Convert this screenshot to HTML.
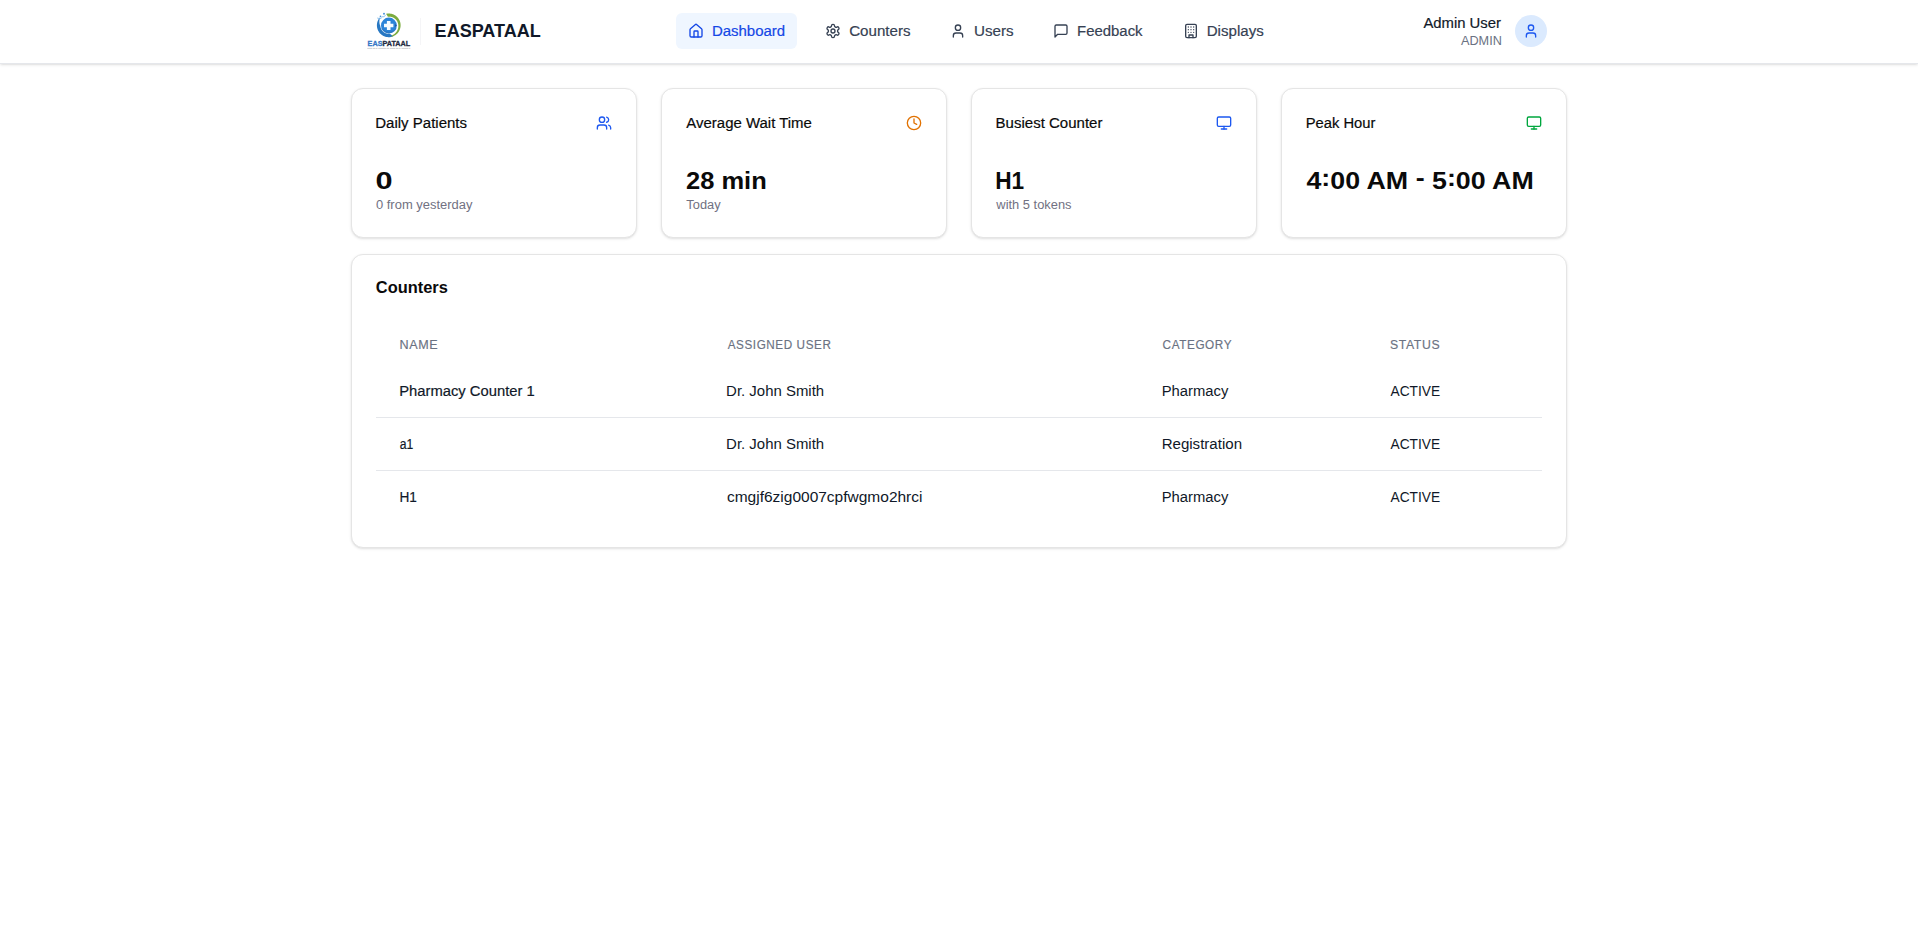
<!DOCTYPE html>
<html lang="en">
<head>
<meta charset="utf-8">
<title>EASPATAAL - Dashboard</title>
<style>
*{box-sizing:border-box;margin:0;padding:0}
html,body{width:1918px;height:949px;overflow:hidden;background:#fff}
body{font-family:"Liberation Sans",sans-serif;color:#0a0a0a;position:relative;-webkit-font-smoothing:antialiased}
.t{position:absolute;white-space:nowrap;line-height:20px;font-size:14px;transform-origin:0 50%}
svg.i{position:absolute;width:16px;height:16px;fill:none;stroke:currentColor;stroke-width:2;stroke-linecap:round;stroke-linejoin:round}
#hdr{position:absolute;left:0;top:0;width:1918px;height:64px;background:#fff;border-bottom:1px solid #e5e7eb;box-shadow:0 1px 3px rgba(0,0,0,.1),0 1px 2px -1px rgba(0,0,0,.1)}
#brand{top:17px;font-size:18px;line-height:28px;font-weight:700;color:#101828}
#sep{position:absolute;left:420px;top:18px;width:1px;height:27px;background:#f5f5f7}
.nv{font-weight:500;-webkit-text-stroke:.18px currentColor;color:#364153;top:21px}
#navact{position:absolute;left:676px;top:13px;width:121px;height:36px;border-radius:6px;background:#eff6ff}
.card{position:absolute;background:#fff;border:1px solid #e5e5e5;border-radius:12px;box-shadow:0 1px 3px rgba(0,0,0,.1),0 1px 2px -1px rgba(0,0,0,.1)}
.ct{top:113px;font-weight:500;-webkit-text-stroke:.18px currentColor;color:#0a0a0a}
.cv{top:165px;font-size:24px;line-height:32px;font-weight:700;color:#0a0a0a}
.cv i{font-style:normal;position:relative;top:-3.2px}
.cs{top:197px;font-size:12px;line-height:16px;color:#717182}
.th{-webkit-text-stroke:.15px currentColor;top:337px;font-size:12px;line-height:16px;font-weight:500;color:#6a7282;letter-spacing:.6px}
.td{color:#101828}
.r1{top:381px}.r2{top:434px}.r3{top:487px}
.dv{position:absolute;left:376px;width:1166px;height:1px;background:#e5e7eb}
</style>
</head>
<body>
<div id="hdr"></div>
<!-- logo -->
<svg id="logo" style="position:absolute;left:360px;top:6px" width="60" height="50" viewBox="360 6 60 50">
  <path d="M393.26 36.33L392.63 36.57L392.00 36.76L391.35 36.92L390.70 37.05L390.04 37.14L389.37 37.19L388.70 37.20L388.04 37.18L387.38 37.11L386.72 37.02L386.06 36.88L385.42 36.71L384.79 36.50L384.17 36.26L383.56 35.98L382.97 35.67L382.40 35.33L381.85 34.96L381.32 34.55L380.81 34.12L380.33 33.66L379.88 33.17L379.45 32.66L379.05 32.13L378.69 31.57L378.35 30.99L378.05 30.40L377.78 29.79L377.55 29.17L377.35 28.53L377.18 27.88L377.06 27.23L376.97 26.57L376.92 25.91L376.90 25.24L376.92 24.57L376.98 23.91L377.08 23.25L377.21 22.60L377.38 21.95L377.59 21.32L377.83 20.70L378.10 20.09L378.41 19.50L378.75 18.93L379.12 18.38L379.52 17.84L379.96 17.34L379.96 17.34L379.84 18.10L379.69 18.78L379.57 19.45L379.47 20.10L379.41 20.73L379.38 21.35L379.38 21.96L379.42 22.55L379.48 23.13L379.58 23.69L379.70 24.23L379.86 24.75L380.03 25.26L380.24 25.74L380.35 26.21L380.41 26.68L380.50 27.15L380.62 27.61L380.76 28.06L380.93 28.51L381.12 28.94L381.34 29.37L381.58 29.78L381.84 30.18L382.12 30.56L382.43 30.92L382.75 31.27L383.09 31.60L383.46 31.91L383.83 32.20L384.23 32.47L384.64 32.71L385.06 32.93L385.49 33.13L385.93 33.30L386.39 33.45L386.85 33.57L387.31 33.67L387.78 33.74L388.26 33.78L388.73 33.80L389.21 33.79L389.68 33.75L390.22 34.09L390.83 34.53L391.50 34.99L392.27 35.49L393.26 36.33Z" fill="#2878c3"/>
  <path d="M385.95 13.85L386.72 13.69L387.50 13.57L388.29 13.51L389.07 13.50L389.86 13.55L390.65 13.65L391.42 13.79L392.18 14.00L392.93 14.25L393.66 14.55L394.37 14.90L395.05 15.29L395.71 15.73L396.33 16.22L396.92 16.74L397.48 17.30L397.99 17.90L398.47 18.53L398.90 19.19L399.28 19.88L399.62 20.59L399.91 21.33L400.15 22.08L400.34 22.85L400.48 23.62L400.57 24.41L400.60 25.20L400.58 25.99L400.51 26.77L400.38 27.55L400.21 28.32L399.98 29.08L399.70 29.82L399.38 30.53L399.00 31.23L398.58 31.90L398.12 32.54L397.61 33.14L397.07 33.72L396.49 34.25L395.87 34.74L395.23 35.20L394.55 35.60L393.85 35.97L393.12 36.28L392.38 36.54L391.62 36.76L390.85 36.92L390.85 36.92L391.51 36.30L392.07 35.56L392.64 35.05L393.25 34.70L393.84 34.33L394.39 33.91L394.92 33.47L395.41 33.00L395.88 32.50L396.30 31.97L396.69 31.43L397.04 30.86L397.35 30.27L397.61 29.66L397.84 29.05L398.03 28.42L398.17 27.78L398.27 27.14L398.33 26.50L398.34 25.86L398.31 25.22L398.24 24.58L398.13 23.96L397.98 23.35L397.79 22.75L397.56 22.17L397.30 21.61L397.00 21.06L396.66 20.55L396.29 20.05L395.90 19.59L395.47 19.15L395.02 18.75L394.54 18.38L394.04 18.04L393.53 17.73L392.99 17.47L392.45 17.24L391.89 17.05L391.32 16.89L390.74 16.78L390.16 16.70L389.58 16.66L389.00 16.67L388.42 16.71L387.85 16.78L387.02 15.36L385.95 13.85Z" fill="#7cab3f"/>
  <circle cx="388.9" cy="25.5" r="7.9" fill="#2b84d8"/>
  <path d="M381.3 27.6A7.9 7.9 0 0 0 396.5 27.6A9.5 9.5 0 0 1 381.3 27.6Z" fill="#2a70ba" opacity=".6"/>
  <path d="M386.9 21h3.6v2.8h2.9v3.5h-2.9v2.7h-3.6v-2.7h-2.9v-3.5h2.9z" fill="#f4fbff"/>
  <path d="M395.2 24l1.6 1.4-1.6 1.5z" fill="#234f9c"/>
  <circle cx="384" cy="13.7" r="0.95" fill="#3f8ed8"/>
  <circle cx="380.5" cy="16.3" r="0.85" fill="#3f8ed8"/>
  <path d="M377.6 18.2q2.4 1.4 4-.2M382.2 16.9q1.8.4 3.2-1.3" stroke="#6db1e8" stroke-width=".8" fill="none" stroke-linecap="round"/>
  <text x="367.6" y="46.2" font-family="Liberation Sans, sans-serif" font-weight="700" font-size="7.3" textLength="42.6" lengthAdjust="spacingAndGlyphs"><tspan fill="#3576c6" stroke="#3576c6" stroke-width=".3">EAS</tspan><tspan fill="#232a40" stroke="#232a40" stroke-width=".3">PATAAL</tspan></text>
  <path d="M367.3 48.4h43" stroke="#b4b6bb" stroke-width=".9" stroke-dasharray="5.2 .5 2.3 .4 1.5 .5 1 .4 6.8 .5 3 .6" opacity=".75" fill="none"/>
</svg>
<div id="sep"></div>
<span class="t" id="brand" style="left:434px;transform:translateX(0.60px) scaleX(1.0019)">EASPATAAL</span>

<div id="navact"></div>
<svg class="i" style="left:688px;top:23px;color:#1447e6" viewBox="0 0 24 24"><path d="M15 21v-8a1 1 0 0 0-1-1h-4a1 1 0 0 0-1 1v8"/><path d="M3 10a2 2 0 0 1 .709-1.528l7-5.999a2 2 0 0 1 2.582 0l7 5.999A2 2 0 0 1 21 10v9a2 2 0 0 1-2 2H5a2 2 0 0 1-2-2z"/></svg>
<span class="t nv" id="n1" style="left:711px;color:#1447e6;transform:translateX(0.88px) scaleX(1.0704)">Dashboard</span>
<svg class="i" style="left:825px;top:23px;color:#364153" viewBox="0 0 24 24"><path d="M12.22 2h-.44a2 2 0 0 0-2 2v.18a2 2 0 0 1-1 1.73l-.43.25a2 2 0 0 1-2 0l-.15-.08a2 2 0 0 0-2.73.73l-.22.38a2 2 0 0 0 .73 2.73l.15.1a2 2 0 0 1 1 1.72v.51a2 2 0 0 1-1 1.74l-.15.09a2 2 0 0 0-.73 2.73l.22.38a2 2 0 0 0 2.73.73l.15-.08a2 2 0 0 1 2 0l.43.25a2 2 0 0 1 1 1.73V20a2 2 0 0 0 2 2h.44a2 2 0 0 0 2-2v-.18a2 2 0 0 1 1-1.73l.43-.25a2 2 0 0 1 2 0l.15.08a2 2 0 0 0 2.73-.73l.22-.39a2 2 0 0 0-.73-2.73l-.15-.08a2 2 0 0 1-1-1.74v-.5a2 2 0 0 1 1-1.74l.15-.09a2 2 0 0 0 .73-2.73l-.22-.38a2 2 0 0 0-2.73-.73l-.15.08a2 2 0 0 1-2 0l-.43-.25a2 2 0 0 1-1-1.73V4a2 2 0 0 0-2-2z"/><circle cx="12" cy="12" r="3"/></svg>
<span class="t nv" id="n2" style="left:849px;transform:translateX(0.18px) scaleX(1.0797)">Counters</span>
<svg class="i" style="left:950px;top:23px;color:#364153" viewBox="0 0 24 24"><path d="M19 21v-2a4 4 0 0 0-4-4H9a4 4 0 0 0-4 4v2"/><circle cx="12" cy="7" r="4"/></svg>
<span class="t nv" id="n3" style="left:973px;transform:translateX(0.93px) scaleX(1.0841)">Users</span>
<svg class="i" style="left:1053px;top:23px;color:#364153" viewBox="0 0 24 24"><path d="M21 15a2 2 0 0 1-2 2H7l-4 4V5a2 2 0 0 1 2-2h14a2 2 0 0 1 2 2z"/></svg>
<span class="t nv" id="n4" style="left:1077px;transform:translateX(0.03px) scaleX(1.0663)">Feedback</span>
<svg class="i" style="left:1183px;top:23px;color:#364153" viewBox="0 0 24 24"><rect width="16" height="20" x="4" y="2" rx="2" ry="2"/><path d="M9 22v-4h6v4"/><path d="M8 6h.01"/><path d="M16 6h.01"/><path d="M12 6h.01"/><path d="M12 10h.01"/><path d="M12 14h.01"/><path d="M16 10h.01"/><path d="M16 14h.01"/><path d="M8 10h.01"/><path d="M8 14h.01"/></svg>
<span class="t nv" id="n5" style="left:1206px;transform:translateX(0.73px) scaleX(1.0773)">Displays</span>

<span class="t" id="au" style="left:1423px;top:13px;font-weight:500;-webkit-text-stroke:.18px currentColor;color:#101828;transform:translateX(0.39px) scaleX(1.0608)">Admin User</span>
<span class="t" id="ar" style="left:1460px;top:33px;font-size:12px;line-height:16px;color:#6a7282;transform:translateX(0.96px) scaleX(1.0573)">ADMIN</span>
<div style="position:absolute;left:1515px;top:15px;width:32px;height:32px;border-radius:50%;background:#dbeafe"></div>
<svg class="i" style="left:1523px;top:23px;color:#1d58f0" viewBox="0 0 24 24"><path d="M19 21v-2a4 4 0 0 0-4-4H9a4 4 0 0 0-4 4v2"/><circle cx="12" cy="7" r="4"/></svg>

<!-- stat cards -->
<div class="card" style="left:351px;top:88px;width:286px;height:150px"></div>
<div class="card" style="left:661px;top:88px;width:286px;height:150px"></div>
<div class="card" style="left:971px;top:88px;width:286px;height:150px"></div>
<div class="card" style="left:1281px;top:88px;width:286px;height:150px"></div>

<span class="t ct" id="c1t" style="left:375px;transform:translateX(0.25px) scaleX(1.0723)">Daily Patients</span>
<svg class="i" style="left:596px;top:115px;color:#1d58f0" viewBox="0 0 24 24"><path d="M16 21v-2a4 4 0 0 0-4-4H6a4 4 0 0 0-4 4v2"/><circle cx="9" cy="7" r="4"/><path d="M22 21v-2a4 4 0 0 0-3-3.87"/><path d="M16 3.13a4 4 0 0 1 0 7.75"/></svg>
<span class="t cv" id="c1v" style="left:375px;transform:translateX(0.44px) scaleX(1.2797)">0</span>
<span class="t cs" id="c1s" style="left:375px;transform:translateX(0.97px) scaleX(1.0789)">0 from yesterday</span>

<span class="t ct" id="c2t" style="left:686px;transform:translateX(0.37px) scaleX(1.0680)">Average Wait Time</span>
<svg class="i" style="left:906px;top:115px;color:#e17100" viewBox="0 0 24 24"><circle cx="12" cy="12" r="10"/><polyline points="12 6 12 12 16 14"/></svg>
<span class="t cv" id="c2v" style="left:685px;transform:translateX(0.98px) scaleX(1.0619)">28 min</span>
<span class="t cs" id="c2s" style="left:686px;transform:translateX(0.36px) scaleX(1.0680)">Today</span>

<span class="t ct" id="c3t" style="left:995px;transform:translateX(0.60px) scaleX(1.0727)">Busiest Counter</span>
<svg class="i" style="left:1216px;top:115px;color:#1d58f0" viewBox="0 0 24 24"><rect width="20" height="14" x="2" y="3" rx="2"/><line x1="8" x2="16" y1="21" y2="21"/><line x1="12" x2="12" y1="17" y2="21"/></svg>
<span class="t cv" id="c3v" style="left:995px;transform:translateX(0.21px) scaleX(0.9444)">H1</span>
<span class="t cs" id="c3s" style="left:996px;transform:translateX(0.36px) scaleX(1.0736)">with 5 tokens</span>

<span class="t ct" id="c4t" style="left:1305px;transform:translateX(0.63px) scaleX(1.0545)">Peak Hour</span>
<svg class="i" style="left:1526px;top:115px;color:#00a63e" viewBox="0 0 24 24"><rect width="20" height="14" x="2" y="3" rx="2"/><line x1="8" x2="16" y1="21" y2="21"/><line x1="12" x2="12" y1="17" y2="21"/></svg>
<span class="t cv" id="c4v" style="left:1306px;transform:translateX(0.43px) scaleX(1.1163)">4<i>:</i>00 AM <i>-</i> 5<i>:</i>00 AM</span>

<!-- counters table card -->
<div class="card" style="left:351px;top:254px;width:1216px;height:294px"></div>
<span class="t" id="tt" style="left:375px;top:276px;font-size:16px;line-height:24px;font-weight:700;color:#0a0a0a;transform:translateX(0.83px) scaleX(1.0245)">Counters</span>

<span class="t th" id="h1" style="left:399px;transform:translateX(0.51px) scaleX(1.0489)">NAME</span>
<span class="t th" id="h2" style="left:727px;transform:translateX(0.67px) scaleX(0.9746)">ASSIGNED USER</span>
<span class="t th" id="h3" style="left:1162px;transform:translateX(0.58px) scaleX(0.9790)">CATEGORY</span>
<span class="t th" id="h4" style="left:1389px;transform:translateX(0.97px) scaleX(1.0227)">STATUS</span>

<span class="t td r1" id="a1" style="-webkit-text-stroke:.18px currentColor;left:399px;font-weight:500;transform:translateX(0.16px) scaleX(1.0561)">Pharmacy Counter 1</span>
<span class="t td r1" id="a2" style="left:726px;transform:translateX(0.10px) scaleX(1.0677)">Dr. John Smith</span>
<span class="t td r1" id="a3" style="left:1161px;transform:translateX(0.65px) scaleX(1.0574)">Pharmacy</span>
<span class="t td r1" id="a4" style="left:1390px;transform:translateX(0.52px) scaleX(0.9814)">ACTIVE</span>
<div class="dv" style="top:417px"></div>
<span class="t td r2" id="b1" style="-webkit-text-stroke:.18px currentColor;left:399px;font-weight:500;transform:translateX(0.79px) scaleX(0.8693)">a1</span>
<span class="t td r2" id="b2" style="left:726px;transform:translateX(0.10px) scaleX(1.0677)">Dr. John Smith</span>
<span class="t td r2" id="b3" style="left:1161px;transform:translateX(0.63px) scaleX(1.0763)">Registration</span>
<span class="t td r2" id="b4" style="left:1390px;transform:translateX(0.52px) scaleX(0.9814)">ACTIVE</span>
<div class="dv" style="top:470px"></div>
<span class="t td r3" id="d1" style="-webkit-text-stroke:.18px currentColor;left:399px;font-weight:500;transform:translateX(0.42px) scaleX(0.9743)">H1</span>
<span class="t td r3" id="d2" style="left:726px;transform:translateX(0.93px) scaleX(1.1070)">cmgjf6zig0007cpfwgmo2hrci</span>
<span class="t td r3" id="d3" style="left:1161px;transform:translateX(0.65px) scaleX(1.0574)">Pharmacy</span>
<span class="t td r3" id="d4" style="left:1390px;transform:translateX(0.52px) scaleX(0.9814)">ACTIVE</span>
</body>
</html>
